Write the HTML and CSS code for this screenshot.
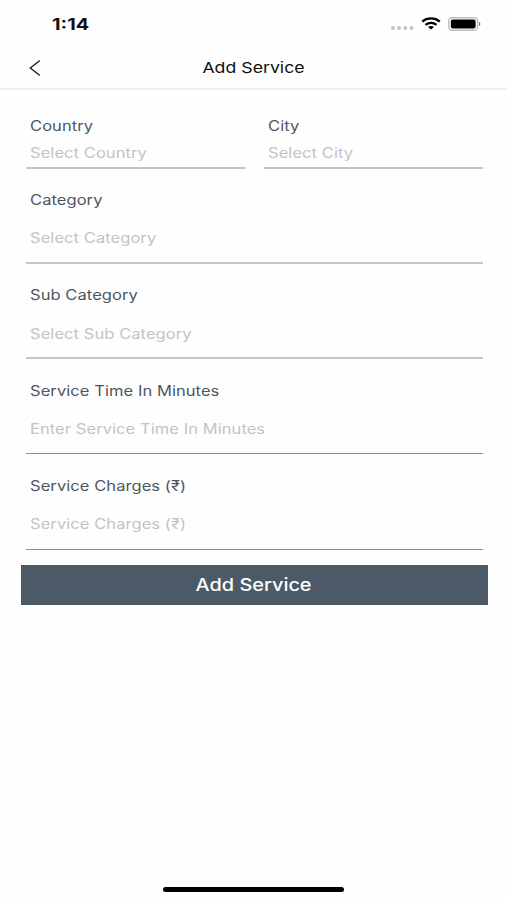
FILE: index.html
```html
<!DOCTYPE html>
<html lang="en">
<head>
  <meta charset="UTF-8">
  <meta name="viewport" content="width=device-width, initial-scale=1.0">
  <title>Add Service</title>
  <link rel="stylesheet" href="styles.css">
</head>
<body>

  <div class="status-bar">
    <span class="time">1:14</span>
    <div class="status-icons">
      <svg class="dots" width="24" height="6" viewBox="0 0 24 6" fill="#c4c4c4">
        <circle cx="3" cy="3" r="2"/>
        <circle cx="9.1" cy="3" r="2"/>
        <circle cx="15.3" cy="3" r="2"/>
        <circle cx="21.5" cy="3" r="2"/>
      </svg>
      <svg class="wifi" width="20" height="13" viewBox="0 0 20 13" fill="none" stroke="#000">
        <path d="M1.2 4.6C6 .4 14 .4 18.8 4.6" stroke-width="2.3"/>
        <path d="M4.5 7.8C7.6 5.2 12.4 5.2 15.5 7.8" stroke-width="2.2"/>
        <path d="M7 10.1Q10 8 13 10.1L10 12.6Z" fill="#000" stroke="none"/>
      </svg>
      <svg class="battery" width="33" height="14" viewBox="0 0 33 14">
        <rect x=".8" y=".8" width="28.8" height="12.4" rx="3.5" fill="#fff" stroke="#bdbdbd" stroke-width="1.4"/>
        <rect x="2.8" y="2.6" width="24.8" height="8.8" rx="1.8" fill="#000"/>
        <path d="M31 5V9Q32.4 8.4 32.4 7T31 5Z" fill="#777"/>
      </svg>
    </div>
  </div>

  <header class="header">
    <button class="back" aria-label="Back">
      <svg width="12" height="18" viewBox="0 0 12 18" fill="none" stroke="#222" stroke-width="1.4">
        <path d="M10.9 1.5L1.3 9L10.9 16.5"/>
      </svg>
    </button>
    <h1>Add Service</h1>
  </header>

  <form class="service-form">
    <div class="row">
      <div class="field short">
        <label for="country">Country</label>
        <input type="text" id="country" placeholder="Select Country">
      </div>
      <div class="field short">
        <label for="city">City</label>
        <input type="text" id="city" placeholder="Select City">
      </div>
    </div>
    <div class="field">
      <label for="category">Category</label>
      <input type="text" id="category" placeholder="Select Category">
    </div>
    <div class="field">
      <label for="subcategory">Sub Category</label>
      <input type="text" id="subcategory" placeholder="Select Sub Category">
    </div>
    <div class="field dark">
      <label for="minutes">Service Time In Minutes</label>
      <input type="text" id="minutes" placeholder="Enter Service Time In Minutes">
    </div>
    <div class="field dark">
      <label for="charges">Service Charges (₹)</label>
      <input type="text" id="charges" placeholder="Service Charges (₹)">
    </div>
    <button type="button" class="submit"><span>Add Service</span></button>
  </form>

  <div class="home-bar"></div>

</body>
</html>
```
FILE: styles.css
```css
* {
  box-sizing: border-box;
}

body {
  margin: 0;
  height: 100vh;
  display: flex;
  flex-direction: column;
  background-color: #fefefe;
  font-family: Inter, "Liberation Sans", sans-serif;
  overflow: hidden;
}

.status-bar {
  height: 46px;
  padding: 1px 26px 0 52px;
  display: flex;
  align-items: center;
  justify-content: space-between;
}

.time {
  font-size: 16px;
  font-weight: 700;
  color: #111;
  transform: scaleX(1.24);
  transform-origin: left;
}

.status-icons {
  display: flex;
  align-items: center;
}

.dots {
  margin: 9px 7px 0 0;
}

.wifi {
  margin-right: 7px;
}

.header {
  height: 44px;
  display: grid;
  grid-template-columns: 70px 1fr 70px;
  align-items: center;
  border-bottom: 2px solid #efefef;
}

.back {
  display: flex;
  padding: 1px 0 0 29px;
  border: none;
  background: none;
}

h1 {
  margin: 0;
  font-size: 15px;
  font-weight: 400;
  text-align: center;
  color: #111;
  transform: scaleX(1.18);
}

.service-form {
  flex: 1;
  padding: 26px 19.5px 0 20.5px;
}

.row {
  display: flex;
  gap: 19px;
  margin: 0 5px;
}

.row .field {
  flex: 1;
  margin: 0;
}

.field {
  height: 95.3px;
  margin: 0 5px;
  padding: 21.5px 5px 0 4.6px;
  display: flex;
  flex-direction: column;
  border-bottom: 2px solid #c3c5c6;
}

.field.dark {
  border-bottom: 1px solid #89929a;
}

/* wide lettering for labels and inputs */
label,
input {
  width: 84.5%;
  font-size: 14px;
  letter-spacing: 0.05px;
  transform: scaleX(1.18);
  transform-origin: left;
}

label {
  height: 20px;
  line-height: 20px;
  font-weight: 400;
  color: #4c5661;
}

input {
  height: 24px;
  margin-top: 15.8px;
  padding: 0;
  border: none;
  outline: none;
  background: none;
  font-family: inherit;
}

.field.short {
  height: 52.5px;
  padding-top: 0;
}

.short input {
  margin-top: 4px;
}

input::placeholder {
  color: #c3c3c5;
}

.submit {
  display: block;
  width: 100%;
  height: 40px;
  margin-top: 15px;
  border: none;
  background-color: #4c5a67;
  font-family: inherit;
  font-size: 17px;
  font-weight: 450;
  color: #fff;
}

.submit span {
  display: inline-block;
  transform: scaleX(1.17);
}

.home-bar {
  width: 181px;
  height: 5px;
  margin: 0 auto 8px;
  border-radius: 3px;
  background-color: #000;
}
```
